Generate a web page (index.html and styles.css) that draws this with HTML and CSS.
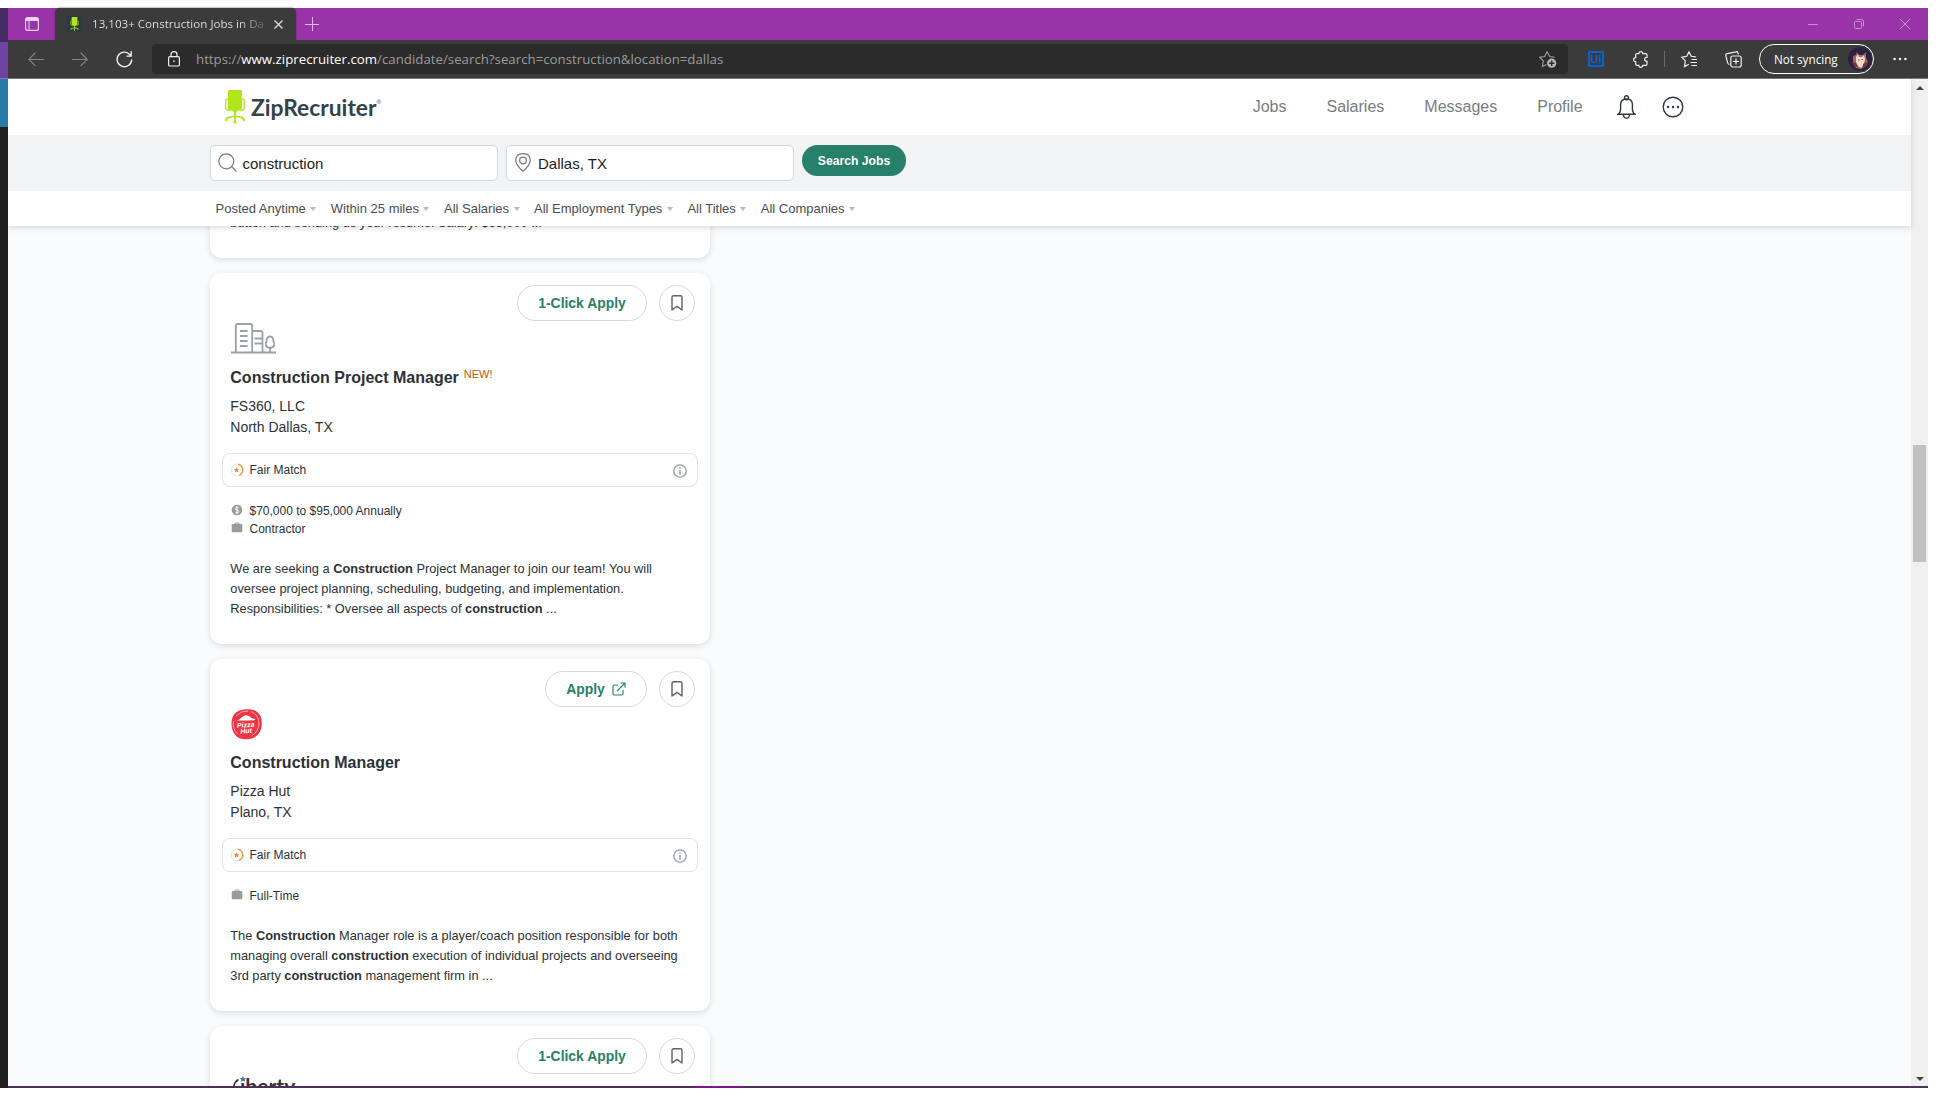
FILE: index.html
```html
<!DOCTYPE html>
<html lang="en">
<head>
<meta charset="utf-8">
<title>13,103+ Construction Jobs in Dallas, TX</title>
<link rel="stylesheet" href="styles.css">
</head>
<body>
<svg width="0" height="0" class="sprite">
  <symbol id="bookmark" viewBox="0 0 12 16"><path d="M1 15V2.500Q1 .8 2.700.8h6.600Q11 .8 11 2.500V15l-5-3.600z" fill="none" stroke="#5c6266" stroke-width="1.400" stroke-linejoin="round"/></symbol>
  <symbol id="chair" viewBox="0 0 20 34"><path d="M4 0H16Q17 0 17 1V19Q17 20.500 15.500 20.500H13L11 22.500V25.700Q18.800 26 19.800 29L19.600 31.200H18.200Q18 27.800 11 27.300V31L11.700 33.500H8.300L9 31V27.300Q2 27.800 1.800 31.200H.4L.2 29Q1.200 26 9 25.700V22.500L7 20.500H4.500Q3 20.500 3 19V1Q3 0 4 0Z" fill="#b1e61c"/><path d="M3.500 9.200H2Q.7 9.200.7 10.500V18Q.7 20 3 20H5M16.500 9.200H18Q19.300 9.200 19.300 10.500V18Q19.300 20 17 20H15" fill="none" stroke="#b1e61c" stroke-width="1.300"/></symbol>
  <symbol id="fair" viewBox="0 0 14 14"><circle cx="7" cy="7" r="5.800" fill="none" stroke="#e3e5e6" stroke-width="1"/><path d="M8 1.300a5.800 5.800 0 0 1 1 11.100" fill="none" stroke="#f79a48" stroke-width="1.400"/><path d="M6.500 4.200l.8 1.800 2 .2-1.500 1.300.5 2-1.800-1-1.800 1 .5-2-1.500-1.300 2-.2z" fill="#f5883a"/></symbol>
  <symbol id="info" viewBox="0 0 14 14"><circle cx="7" cy="7" r="6.200" fill="none" stroke="#92989b" stroke-width="1.300"/><path d="M7 6v4.800M7 3.200v1.500" stroke="#92989b" stroke-width="1.400"/></symbol>
  <symbol id="case" viewBox="0 0 12 11"><path d="M4 2.200V1h4v1.200" fill="none" stroke="#a0a6a8" stroke-width="1"/><rect x=".7" y="2" width="10.600" height="8.200" rx="1.200" fill="#959c9f"/></symbol>
</svg>
<div class="desktop">
  <div class="behind"><i class="b1"></i><i class="b2"></i><i class="b3"></i></div>
  <div class="window">
    <div class="titlebar">
      <svg class="tabmenu" width="14" height="14" viewBox="0 0 14 14" fill="none" stroke="#ecd3f2"><rect x=".6" y=".6" width="12.800" height="12.800" rx="2" stroke-width="1.200"/><path d="M1 2.500h12" stroke-width="3"/><path d="M4 4v9"/></svg>
      <div class="tab">
        <span class="favicon"><svg width="9" height="14"><use href="#chair"/></svg></span>
        <span class="tabtitle">13,103+ Construction Jobs in Da</span>
        <svg class="tabx" width="9" height="9" viewBox="0 0 9 9" stroke="#dedede" stroke-width="1.300"><path d="M.5.500l8 8M8.500.500l-8 8"/></svg>
      </div>
      <svg class="plus" width="14" height="14" viewBox="0 0 14 14" stroke="#ddb9e5"><path d="M0 7.500h14M7.500 0v14"/></svg>
      <div class="caption">
        <svg width="10" height="10" stroke="#c98fd5"><path d="M0 5.500h10"/></svg>
        <svg width="10" height="10" fill="none" stroke="#c98fd5"><rect x=".5" y="2.500" width="7" height="7" rx="1"/><path d="M2.500.500h5q2 0 2 2v5"/></svg>
        <svg width="10" height="10" stroke="#c98fd5"><path d="M0 0l10 10M10 0L0 10"/></svg>
      </div>
    </div>
    <div class="toolbar">
      <svg class="back" width="16" height="14" viewBox="0 0 16 14" fill="none" stroke="#858585" stroke-width="1.100"><path d="M16 7.500H.8M7.500.500L.7 7.500l6.800 6.500"/></svg>
      <svg class="fwd" width="16" height="14" viewBox="0 0 16 14" fill="none" stroke="#858585" stroke-width="1.100"><path d="M0 7.500h15.200M8.500.500l6.800 7-6.800 6.500"/></svg>
      <svg class="reload" width="17" height="17" viewBox="0 0 17 17" fill="none" stroke="#f2f2f2" stroke-width="1.400"><path d="M15.700 8.500a7.300 7.300 0 1 1-2-5.100l1.300 1.400M15.200.300v4.800h-4.700"/></svg>
      <div class="address">
        <svg class="lock" width="12" height="16" viewBox="0 0 12 16" fill="none" stroke="#f2f2f2" stroke-width="1.200"><rect x=".6" y="5.600" width="10.800" height="9.400" rx="1.300"/><path d="M3 5.500V3.500q0-2.800 3-2.800t3 2.800v2"/><path d="M5.300 10.200h1.400" stroke-width="1.500"/></svg>
        <span class="url">https://<b>www.ziprecruiter.com</b>/candidate/search?search=construction&amp;location=dallas</span>
        <svg class="addfav" width="18" height="17" viewBox="0 0 18 17" fill="none" stroke="#a0a0a0" stroke-width="1.100"><path d="M15.500 6.200l-4.700-.7L8 .8 5.700 5.600.8 6.300 4.300 10l-1 5.600 4.200-2"/><circle cx="12.700" cy="12.200" r="4.600" fill="#b5b5b5" stroke="none"/><path d="M12.700 9.500v5.400M10 12.200h5.400" stroke="#2c2c2c" stroke-width="1.400"/></svg>
      </div>
      <span class="ui">Ui</span>
      <svg class="puzzle" width="15" height="17" viewBox="0 0 15 17" fill="none" stroke="#eee" stroke-width="1.200"><path d="M4 2.600h1.800q0-2 2-2t2 2h2.900q1.300 0 1.300 1.300v2.400q-2.400 0-2.400 2t2.400 2V13q0 1.300-1.300 1.300H9.800q0 2-2 2t-2-2H4q-1.300 0-1.300-1.300v-2.400Q.6 10.600.6 8.700t2.100-2V4q0-1.400 1.300-1.400z"/></svg>
      <i class="sep"></i>
      <svg class="favs" width="17" height="17" viewBox="0 0 17 17" fill="none" stroke="#eee" stroke-width="1.200"><path d="M14.800 5.800l-4.500-.5L8 .9 5.700 5.300.8 6.300l3.500 3.500-.8 5.800 4.300-2.400M10.500 8.500H16M9.500 11.500H16M10.500 14.500H16"/></svg>
      <svg class="coll" width="17" height="17" viewBox="0 0 17 17" fill="none" stroke="#eee" stroke-width="1.200"><path d="M13.500 3.500L12.800 1.700Q12.400.4 11 .8L2.200 2.600Q.5 3 .8 4.600l1.700 6.700q.5 2 2 2.200"/><rect x="5.800" y="5" width="10.400" height="11" rx="2"/><path d="M11 7.500v6M8 10.500h6"/></svg>
      <div class="profile"><span>Not syncing</span>
        <svg width="24" height="24" viewBox="0 0 24 24"><circle cx="12" cy="12" r="12" fill="#2b2140"/><path d="M5 9l3-1 1-3 2 3h4l3-3v6l2 4-2 4-5 3-5-1-3-5z" fill="#a8655a"/><path d="M8 10l2-3 1 3h3l2-2 1 4-1 5-3 4-3-2-2-4z" fill="#efd8c8"/><path d="M4 15l4 1 2 4-4-1zM15 17l5-3-2 5-3 2z" fill="#7a2f3b"/><path d="M10 13h1.500M13.500 12.500H15" stroke="#93505a"/></svg>
      </div>
      <svg class="dots" width="14" height="4" fill="#eee"><circle cx="1.600" cy="2" r="1.300"/><circle cx="7" cy="2" r="1.300"/><circle cx="12.400" cy="2" r="1.300"/></svg>
    </div>
    <div class="viewport">
      <div class="page">
        <div class="sticky">
          <header class="head">
            <svg class="logochair" width="20" height="34"><use href="#chair"/></svg>
            <div class="brandbox"><span class="brand">ZipRecruiter</span><sup class="reg">®</sup></div>
            <nav class="nav"><a>Jobs</a><a>Salaries</a><a>Messages</a><a>Profile</a></nav>
            <svg class="bell" width="19" height="24" viewBox="0 0 19 24" fill="none" stroke="#2f3a3f" stroke-width="1.400"><circle cx="9.500" cy="2.700" r="2"/><path d="M1 19.300q2.600-1.800 2.600-5.300V9.500Q3.600 4 9.500 4t5.900 5.500V14q0 3.500 2.600 5.300zM6.300 19.500q.5 3.700 3.200 3.700t3.200-3.700"/></svg>
            <svg class="more" width="22" height="22" viewBox="0 0 22 22"><circle cx="11" cy="11" r="9.800" fill="none" stroke="#2f3a3f" stroke-width="1.400"/><g fill="#2f3a3f"><circle cx="6" cy="11" r="1.200"/><circle cx="11" cy="11" r="1.200"/><circle cx="16" cy="11" r="1.200"/></g></svg>
          </header>
          <div class="searchbar">
            <div class="field"><svg width="19" height="19" viewBox="0 0 19 19" fill="none" stroke="#74797d" stroke-width="1.200"><circle cx="8.300" cy="8.300" r="7.500"/><path d="M13.500 13.500l5 5"/></svg><span>construction</span></div>
            <div class="field loc"><svg width="16" height="19" viewBox="0 0 16 19" fill="none" stroke="#74797d" stroke-width="1.200"><path d="M8 18.300Q.8 12 .8 7.500.8.700 8 .700t7.200 6.800Q15.200 12 8 18.300z"/><circle cx="8" cy="7.500" r="3.400"/></svg><span>Dallas, TX</span></div>
            <button class="go">Search Jobs</button>
          </div>
          <div class="filters">
            <span class="f">Posted Anytime</span><span class="f">Within 25 miles</span><span class="f">All Salaries</span><span class="f">All Employment Types</span><span class="f">All Titles</span><span class="f">All Companies</span>
          </div>
        </div>
        <main class="list">
          <article class="card cut"><p class="desc">button and sending us your resume. Salary: $65,000 ...</p></article>
          <article class="card">
            <div class="actions"><button class="apply">1-Click Apply</button><button class="save"><svg width="12" height="16"><use href="#bookmark"/></svg></button></div>
            <div class="logo l1"><svg width="45" height="31" viewBox="0 0 45 31" fill="none" stroke="#9ba0a3" stroke-width="1.800"><path d="M0 29.500h45M4.800 29V3Q4.800 1 6.800 1h12.400q2 0 2 2v26M21 8h8.500q2 0 2 2v19M9 8h7.500M9 13h7.500M9 18h7.500M9 23h7.500M23.500 15.500H31M23.500 20.500H31M39 25v4"/><path d="M39 13.500c-2.800 0-3.600 3-3.300 4.700-2 2.500-1.300 6.600 3.300 6.600s5.300-4.100 3.300-6.600c.3-1.700-.5-4.700-3.300-4.700z"/></svg></div>
            <h2>Construction Project Manager<sup>NEW!</sup></h2>
            <p class="org">FS360, LLC<br>North Dallas, TX</p>
            <div class="match"><svg width="14" height="14"><use href="#fair"/></svg><span>Fair Match</span><svg class="i" width="14" height="14"><use href="#info"/></svg></div>
            <ul class="facts">
              <li><svg width="12" height="12" viewBox="0 0 12 12"><circle cx="6" cy="6" r="5.300" fill="#959c9f"/><path d="M7.800 4.200Q7.400 3.200 6 3.200t-1.700 1.300Q4.300 5.700 6 6t1.800 1.500Q7.800 8.700 6 8.700T4.100 7.600M6 2v8" fill="none" stroke="#fff" stroke-width=".9"/></svg>$70,000 to $95,000 Annually</li>
              <li><svg width="12" height="11"><use href="#case"/></svg>Contractor</li>
            </ul>
            <p class="desc">We are seeking a <b>Construction</b> Project Manager to join our team! You will<br>oversee project planning, scheduling, budgeting, and implementation.<br>Responsibilities: * Oversee all aspects of <b>construction</b> ...</p>
          </article>
          <article class="card">
            <div class="actions"><button class="apply ext">Apply<svg width="14" height="14" viewBox="0 0 14 14" fill="none" stroke="#27806a" stroke-width="1.200"><path d="M6 3H2.500Q1 3 1 4.500v7Q1 13 2.500 13h7q1.500 0 1.500-1.500V8M5 9l7.700-7.700M8.500 1H13v4.500"/></svg></button><button class="save"><svg width="12" height="16"><use href="#bookmark"/></svg></button></div>
            <div class="logo l2"><svg width="31" height="31" viewBox="0 0 31 31"><path d="M5 3.500Q11-.7 20 .5q7 1 9.800 7 2.300 8-.6 15-4 7.200-11 7.500-8 1.500-13.500-3.500Q-.3 21 .6 12 1.500 6 5 3.500z" fill="#ed3543"/><path d="M5 7Q10 1.500 17 2M20 2.500q8 3 8 12.500-1 8-7 11.500M2.500 12Q1 20 7 25.500" fill="none" stroke="#f9b4b8" stroke-width=".9"/><path d="M6 11.500l3-1.500 2-2 3.500-2L18 7l2.500 2 4 1.200-1 1-8 .3z" fill="#fff"/><text x="6" y="18.500" transform="rotate(-4 12 18)" class="phut">Pizza</text><text x="9.500" y="24.500" transform="rotate(-4 12 24)" class="phut">Hut</text></svg></div>
            <h2>Construction Manager</h2>
            <p class="org">Pizza Hut<br>Plano, TX</p>
            <div class="match"><svg width="14" height="14"><use href="#fair"/></svg><span>Fair Match</span><svg class="i" width="14" height="14"><use href="#info"/></svg></div>
            <ul class="facts"><li><svg width="12" height="11"><use href="#case"/></svg>Full-Time</li></ul>
            <p class="desc">The <b>Construction</b> Manager role is a player/coach position responsible for both<br>managing overall <b>construction</b> execution of individual projects and overseeing<br>3rd party <b>construction</b> management firm in ...</p>
          </article>
          <article class="card last">
            <div class="actions"><button class="apply">1-Click Apply</button><button class="save"><svg width="12" height="16"><use href="#bookmark"/></svg></button></div>
            <div class="logo l3"><svg width="70" height="31" viewBox="0 0 70 31"><path d="M7.500 3.500Q1.500 7 2.500 16" fill="none" stroke="#333" stroke-width="1.600"/><path d="M12 0l1 2 2.300.2-1.700 1.500.6 2.300-2.200-1.200L9.800 6l.6-2.300L8.700 2.200 11 2z" fill="#3a7f9f"/><text x="9" y="18" class="lib">ıberty</text></svg></div>
          </article>
        </main>
      </div>
      <div class="scroll"><i class="up"></i><i class="thumb"></i><i class="down"></i></div>
    </div>
    <div class="edge"><i></i></div>
  </div>
</div>
</body>
</html>
```
FILE: styles.css
```css
* { box-sizing: border-box; }
body { margin: 0; background: #fff; font-family: "Liberation Sans", Arial, sans-serif; color: #2b3237; }
p, h2, ul { margin: 0; padding: 0; }
svg { display: block; flex: none; }
button { font: inherit; background: none; border: 0; padding: 0; }
.sprite { position: absolute; }

/* Desktop and browser frame */
.desktop { display: flex; width: 1928px; height: 1096px; padding: 8px 0; overflow: hidden; }
.behind { width: 8px; background: #202020; display: flex; flex-direction: column; }
.b1 { height: 34px; background: #452a63; }
.b2 { height: 37px; background: #6f42a3; border-bottom: 1px solid #9176b5; }
.b3 { height: 48px; background: #277ba6; }
.window { width: 1920px; height: 1080px; display: flex; flex-direction: column; }
.titlebar { height: 32px; background: #9933a8; display: flex; align-items: center; padding-left: 17px; }
.tab { width: 241px; height: 32px; margin-left: 16px; background: #3b3b3b; border-radius: 5px 5px 0 0; display: flex; align-items: center; padding-left: 11px; box-shadow: 0 0 2px #5b2064; }
.favicon { width: 16px; height: 16px; background: #2d3a3f; display: flex; align-items: center; justify-content: center; }
.tabtitle { margin-left: 10px; width: 174px; white-space: nowrap; font: 11.600px/16px "Open Sans", sans-serif; background: linear-gradient(90deg, #e6e6e6 84%, #555 100%); -webkit-background-clip: text; background-clip: text; color: transparent; }
.tabx { margin-left: 8px; }
.plus { margin-left: 9px; }
.caption { margin-left: auto; display: flex; gap: 36px; padding-right: 18px; }
.toolbar { height: 39px; background: #3b3b3b; border-bottom: 1px solid #777; display: flex; align-items: center; padding-left: 20px; }
.fwd { margin-left: 28px; }
.reload { margin-left: 28px; }
.address { width: 1416px; height: 30px; margin-left: 19px; background: #2b2b2b; border-radius: 4px; display: flex; align-items: center; padding: 0 11px 0 16px; }
.url { margin-left: 16px; font: 13.270px/18px "Open Sans", sans-serif; color: #9b9b9b; white-space: nowrap; }
.url b { font-weight: 400; color: #fff; }
.addfav { margin-left: auto; }
.ui { margin-left: 20px; width: 16px; height: 16px; border: 2px solid #0a62d0; color: #0a62d0; font: bold 11px/12px "Liberation Sans", sans-serif; text-align: center; }
.puzzle { margin-left: 29px; }
.sep { width: 1px; height: 16px; background: #6b6b6b; margin-left: 16px; }
.favs { margin-left: 16px; }
.coll { margin-left: 27px; }
.profile { margin-left: 17px; width: 115px; height: 30px; border: 1px solid #fff; border-radius: 15px; display: flex; align-items: center; justify-content: space-between; padding: 0 1px 0 14px; font: 11.700px/16px "Open Sans", sans-serif; color: #fff; white-space: nowrap; }
.dots { margin-left: 19px; }

/* Page header */
.viewport { height: 1007px; display: flex; overflow: hidden; }
.page { width: 1903px; background: #fafbfd; display: flex; flex-direction: column; }
.sticky { position: relative; z-index: 2; background: #fff; box-shadow: 0 2px 6px rgba(0,0,0,.14); flex: none; }
.head { height: 56px; display: flex; align-items: center; padding-left: 217px; }
.brandbox { width: 134px; margin-left: 6px; display: flex; }
.brand { font: bold 22.800px/28px Lato, sans-serif; color: #33434a; }
.reg { font-size: 6px; line-height: 6px; margin-top: 6px; color: #33434a; }
.nav { margin-left: 867.700px; display: flex; gap: 40px; font-size: 16px; color: #787c80; }
.bell { margin-left: 34px; }
.more { margin-left: 26px; }
.searchbar { height: 56px; background: #f1f3f5; display: flex; align-items: flex-start; gap: 8px; padding: 10px 0 0 202px; }
.field { width: 288px; height: 36px; border: 1px solid #d6d9db; border-radius: 5px; background: #fff; display: flex; align-items: center; padding-left: 6.500px; font-size: 15px; color: #1d1d1d; }
.field svg { margin: 0 6px 2px 0; }
.loc { padding-left: 8px; }
.loc svg { margin-right: 7px; }
.go { width: 104px; height: 31px; border-radius: 16px; background: #27806a; color: #fff; font-weight: bold; font-size: 12.200px; }
.filters { height: 35px; display: flex; align-items: center; gap: 14.500px; padding-left: 207.500px; font-size: 13px; color: #474d51; }
.f { display: flex; align-items: center; white-space: nowrap; }
.f::after { content: ""; border: 3.500px solid transparent; border-top: 4px solid #b5babd; border-bottom: 0; margin-left: 4.500px; }

/* Job cards */
.list { margin-left: 202px; width: 500px; display: flex; flex-direction: column; gap: 15px; }
.card { flex: none; background: #fff; border-radius: 12px; box-shadow: 0 2px 6px rgba(0,0,0,.13); padding: 12px 12px 25px; }
.cut { height: 48px; margin-top: -16px; padding-top: 0; }
.last { height: 200px; }
.actions { display: flex; justify-content: flex-end; gap: 12px; padding-right: 3px; }
.apply { width: 130px; height: 36px; border: 1px solid #d6d9da; border-radius: 18px; color: #27806a; font-weight: bold; font-size: 13.900px; }
.ext { width: 102px; display: flex; align-items: center; justify-content: center; gap: 7px; }
.save { width: 36px; height: 36px; border: 1px solid #d6d9da; border-radius: 50%; display: flex; align-items: center; justify-content: center; }
.logo { margin-left: 9px; padding-top: 2px; height: 32px; }
.l2 { height: 31px; }
.phut { font: italic bold 7px "Liberation Sans", sans-serif; fill: #fff; }
.lib { font: bold 21px Lato, sans-serif; fill: #333; }
h2 { margin: 13px 0 0 8.300px; font-size: 16px; line-height: 24px; height: 24px; white-space: nowrap; }
h2 sup { font-size: 11px; font-weight: 400; color: #c05a00; margin-left: 5px; line-height: 1; vertical-align: 5px; }
.org { margin: 6px 0 0 8.300px; font-size: 14px; line-height: 21px; }
.match { margin: 15px 0 0; width: 476px; height: 34px; border: 1px solid #e0e2e3; border-radius: 8px; display: flex; align-items: center; padding: 0 10px 1px 7px; font-size: 12px; }
.match span { margin-left: 5.500px; }
.i { margin: 2px 0 0 auto; }
.facts { margin: 15px 0 0 9px; list-style: none; font-size: 12px; line-height: 18px; }
.facts li { display: flex; align-items: center; gap: 6.500px; }
.facts svg { margin-bottom: 3px; }
.desc { margin: 21px 0 0 8.300px; font-size: 12.800px; line-height: 20px; white-space: nowrap; }
.cut .desc { margin-top: 3px; }

/* Scrollbar and bottom edge */
.scroll { width: 17px; background: #f0f0f0; display: flex; flex-direction: column; align-items: center; }
.up { border: 4px solid transparent; border-bottom-color: #444; border-top: 0; margin-top: 7px; }
.thumb { width: 13px; height: 117px; background: #c1c1c1; margin-top: 355px; }
.down { border: 4px solid transparent; border-top-color: #444; border-bottom: 0; margin: auto 0 5px; }
.edge { height: 2px; background: #50305a; display: flex; }
.edge i { margin-left: 686px; width: 48px; background: #7a1a8a; }
```
